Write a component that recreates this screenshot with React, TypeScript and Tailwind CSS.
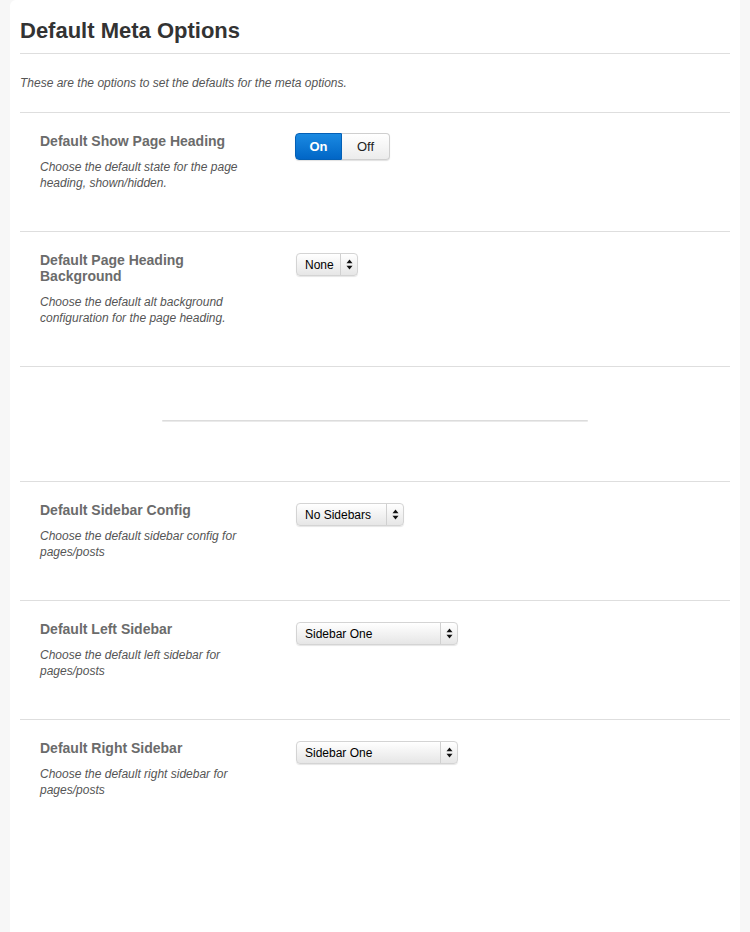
function Toggle() {
  return (
    <div className="flex h-[27px] w-[95px] rounded-[4px] text-[13px] font-['Liberation_Sans',Arial,sans-serif] shadow-[0_1px_1px_rgba(0,0,0,0.12)]">
      <div className="flex w-[47px] items-center justify-center rounded-l-[4px] border border-[#0460b6] bg-gradient-to-b from-[#1a8ae2] to-[#0266c6] font-bold text-white">
        On
      </div>
      <div className="flex flex-1 items-center justify-center rounded-r-[4px] border border-l-0 border-[#cfcfcf] bg-gradient-to-b from-white to-[#ececec] text-[#222]">
        Off
      </div>
    </div>
  );
}

function Select({ label, width }: { label: string; width: string }) {
  return (
    <div
      className={`flex h-[23px] ${width} rounded-[4px] border border-[#d4d4d4] bg-gradient-to-b from-white to-[#e6e6e6] text-[12px] text-black shadow-[0_1px_1px_rgba(0,0,0,0.1)] font-['Liberation_Sans',Arial,sans-serif]`}
    >
      <div className="flex flex-1 items-center pl-[8px]">{label}</div>
      <div className="flex w-[17px] items-center justify-center border-l border-[#d0d0d0]">
        <svg width="7" height="11" viewBox="0 0 7 11">
          <path d="M3.5 0.5 L6.5 4.3 L0.5 4.3 Z" fill="#111" />
          <path d="M3.5 10.5 L6.5 6.7 L0.5 6.7 Z" fill="#111" />
        </svg>
      </div>
    </div>
  );
}

function Row({
  title,
  desc,
  children,
  last,
}: {
  title: string;
  desc: string;
  children: React.ReactNode;
  last?: boolean;
}) {
  return (
    <div className={`flex px-[20px] pt-[20px] pb-[40px] ${last ? 'min-h-[213px]' : 'border-b border-[#dedede]'}`}>
      <div className="w-[255px] shrink-0">
        <div className="max-w-[210px]">
          <h3 className="text-[14px] font-bold leading-[16px] text-[#6b6b6b]">{title}</h3>
          <p className="mt-[10px] text-[12px] italic leading-[16px] text-[#555]">{desc}</p>
        </div>
      </div>
      <div>{children}</div>
    </div>
  );
}

export default function App() {
  return (
    <div className="min-h-[932px] bg-[#f7f7f7] px-[10px] font-['Liberation_Sans',Arial,sans-serif]">
      <div className="min-h-[932px] rounded-tl-[6px] bg-white px-[10px] pt-[18px]">
        <h2 className="border-b border-[#dedede] pb-[9px] text-[22px] font-bold leading-[26px] text-[#333]">
          Default Meta Options
        </h2>
        <p className="border-b border-[#dedede] py-[21px] text-[12px] italic leading-[16px] text-[#555]">
          These are the options to set the defaults for the meta options.
        </p>

        <Row title="Default Show Page Heading" desc="Choose the default state for the page heading, shown/hidden.">
          <Toggle />
        </Row>

        <Row title="Default Page Heading Background" desc="Choose the default alt background configuration for the page heading.">
          <div className="pl-px pt-px">
            <Select label="None" width="w-[62px]" />
          </div>
        </Row>

        <div className="h-[115px] border-b border-[#dedede] pt-[53px]">
          <div className="mx-auto h-[2px] w-[426px] rounded-full border-t border-[#dcdcdc] bg-[#eaeaea]" />
        </div>

        <Row title="Default Sidebar Config" desc="Choose the default sidebar config for pages/posts">
          <div className="pl-px pt-px">
            <Select label="No Sidebars" width="w-[108px]" />
          </div>
        </Row>

        <Row title="Default Left Sidebar" desc="Choose the default left sidebar for pages/posts">
          <div className="pl-px pt-px">
            <Select label="Sidebar One" width="w-[162px]" />
          </div>
        </Row>

        <Row title="Default Right Sidebar" desc="Choose the default right sidebar for pages/posts" last>
          <div className="pl-px pt-px">
            <Select label="Sidebar One" width="w-[162px]" />
          </div>
        </Row>
      </div>
    </div>
  );
}
